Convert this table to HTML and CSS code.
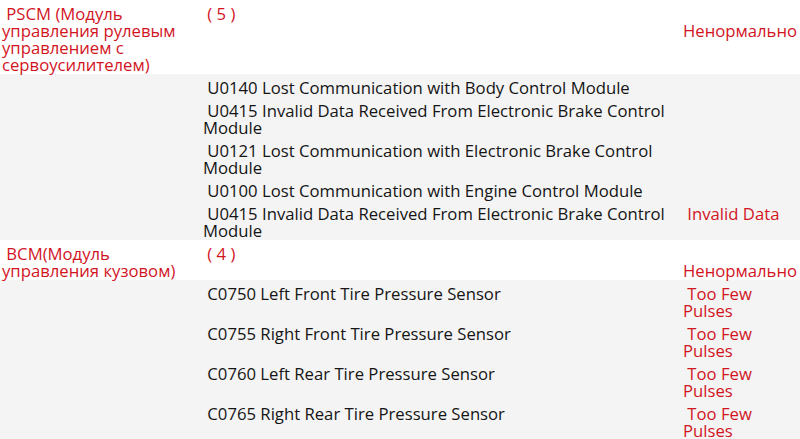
FILE: index.html
```html
<!DOCTYPE html>
<html lang="ru">
<head>
<meta charset="utf-8">
<title>Diagnostics</title>
<link rel="stylesheet" href="styles.css">
</head>
<body>
<table class="report">
  <colgroup>
    <col class="c-name">
    <col class="c-code">
    <col class="c-state">
  </colgroup>
  <tbody>
    <tr class="module">
      <td class="name">&nbsp;PSCM (Модуль управления рулевым управлением с сервоусилителем)</td>
      <td class="count">&nbsp;( 5 )</td>
      <td class="state"><span class="state-text">Ненормально</span></td>
    </tr>
    <tr class="dtc">
      <td></td>
      <td class="code">&nbsp;U0140 Lost Communication with Body Control Module</td>
      <td class="state"></td>
    </tr>
    <tr class="dtc">
      <td></td>
      <td class="code">&nbsp;U0415 Invalid Data Received From Electronic Brake Control Module</td>
      <td class="state"></td>
    </tr>
    <tr class="dtc">
      <td></td>
      <td class="code">&nbsp;U0121 Lost Communication with Electronic Brake Control Module</td>
      <td class="state"></td>
    </tr>
    <tr class="dtc">
      <td></td>
      <td class="code">&nbsp;U0100 Lost Communication with Engine Control Module</td>
      <td class="state"></td>
    </tr>
    <tr class="dtc">
      <td></td>
      <td class="code">&nbsp;U0415 Invalid Data Received From Electronic Brake Control Module</td>
      <td class="state">&nbsp;Invalid Data</td>
    </tr>
    <tr class="module">
      <td class="name">&nbsp;BCM(Модуль управления кузовом)</td>
      <td class="count">&nbsp;( 4 )</td>
      <td class="state"><span class="state-text">Ненормально</span></td>
    </tr>
    <tr class="dtc">
      <td></td>
      <td class="code">&nbsp;C0750 Left Front Tire Pressure Sensor</td>
      <td class="state">&nbsp;Too Few Pulses</td>
    </tr>
    <tr class="dtc">
      <td></td>
      <td class="code">&nbsp;C0755 Right Front Tire Pressure Sensor</td>
      <td class="state">&nbsp;Too Few Pulses</td>
    </tr>
    <tr class="dtc">
      <td></td>
      <td class="code">&nbsp;C0760 Left Rear Tire Pressure Sensor</td>
      <td class="state">&nbsp;Too Few Pulses</td>
    </tr>
    <tr class="dtc">
      <td></td>
      <td class="code">&nbsp;C0765 Right Rear Tire Pressure Sensor</td>
      <td class="state">&nbsp;Too Few Pulses</td>
    </tr>
  </tbody>
</table>
</body>
</html>
```

FILE: styles.css
```css
html, body {
  margin: 0;
  padding: 0;
  background: #ffffff;
}

body {
  font-family: "Open Sans", "Noto Sans", sans-serif;
  font-size: 16.7px;
  line-height: 17px;
  color: #151515;
  overflow: hidden;
}

.report {
  width: 800px;
  border-collapse: collapse;
  table-layout: fixed;
}

.c-name { width: 201px; }
.c-code { width: 480px; }
.c-state { width: 119px; }

.report td {
  padding: 5px 2px 1px 2px;
  vertical-align: top;
}

.module {
  background: #ffffff;
}

.dtc {
  background: #f4f4f4;
}

.name,
.count,
.state {
  color: #d2141f;
}

.state-text {
  display: block;
  margin-top: 17px;
}

.code {
  color: #151515;
}
```
